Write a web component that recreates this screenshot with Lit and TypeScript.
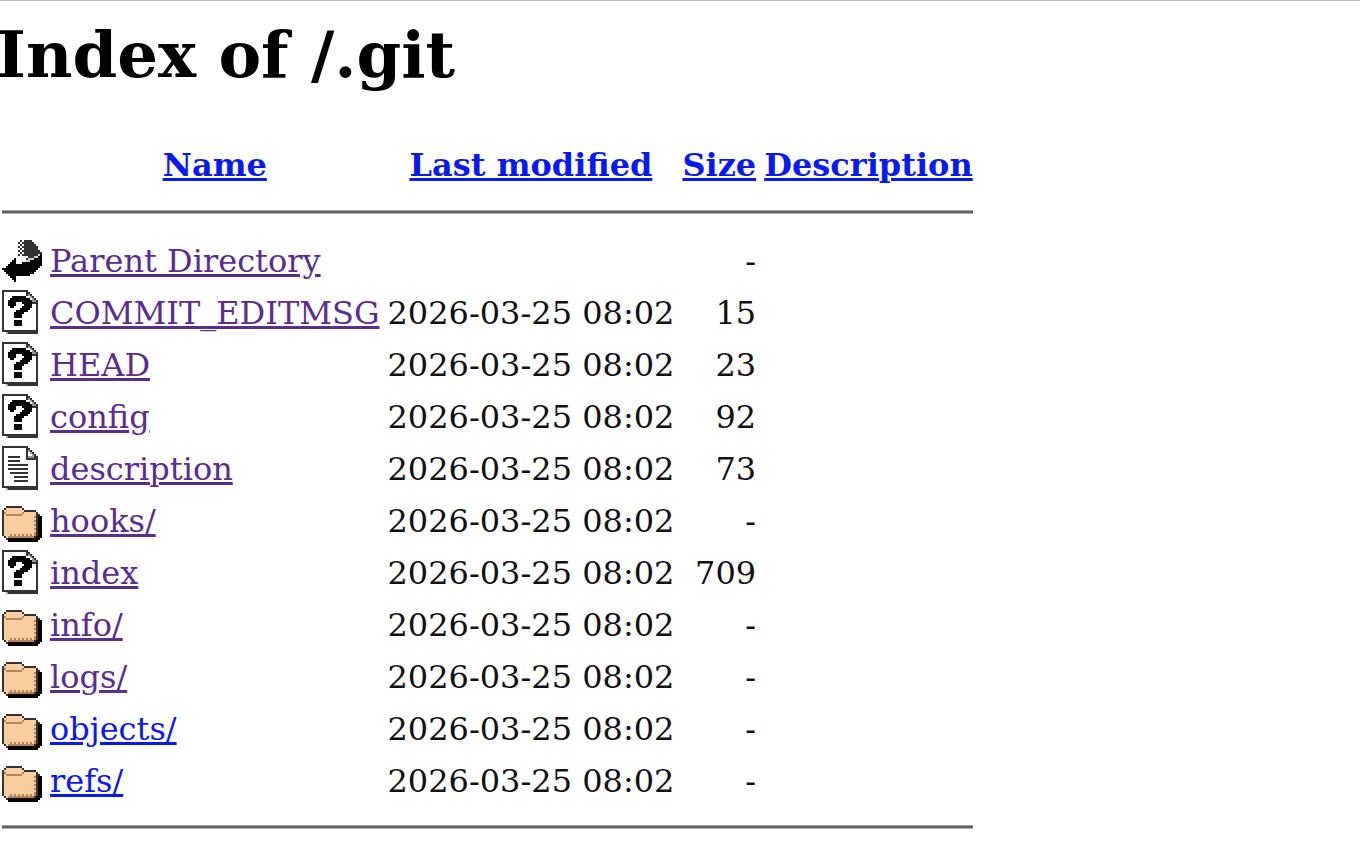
import { LitElement, html, css, svg } from "lit";
import { customElement, property } from "lit/decorators.js";

type Kind = "back" | "unknown" | "text" | "folder";

// Pixel maps, 20 columns by 22 rows; each letter is a palette entry.
const PALETTE: Record<string, string> = {
  k: "#050505",
  d: "#333333",
  g: "#999999",
  l: "#cccccc",
  w: "#ffffff",
  o: "#f9cd9e",
  b: "#b5835a",
};

const MAPS: Record<Kind, string[]> = {
  back: [
    "",
    ".........d.dddd.....",
    "........d.dddddd....",
    ".........d.dddddd...",
    "........d.dddddddd..",
    ".........d.ddddddd..",
    "........d.ddddddddd.",
    ".........d.ddddddddd",
    "........d.ddddddddlk",
    ".............dddllkk",
    "......k.....dlllkkkk",
    ".....kk.....llkkkkkk",
    "....kkk...kkkkkkkkkk",
    "...kkkkkkkkkkkkkkkkk",
    "..kkkkkkkkkkkkkkkkk.",
    "kkkkkkkkkkkkkkkkkk..",
    ".kkkkkkkkkkkkkkkk...",
    "..kkkkkkkkkkkkkk....",
    "...kkkkkkkkkkk......",
    "....kkk.............",
    ".....kk.............",
    "......k.............",
  ],
  unknown: [
    "ddddddddddddd.......",
    "dwwwwwwwwwwwdd......",
    "dwwwwwwwwwwwdgd.....",
    "dwwwwkkkkkkkwwgd....",
    "dwwwkkkkkkkkkkwgd...",
    "dwwkkkkkkkkkkkkggd..",
    "dwwkkkkwwwkkkkkddd..",
    "dwwkkkkwwwwkkkkwwd..",
    "dwwwkkwwwwkkkkkwwd..",
    "dwwwwwwwwkkkkkwwwd..",
    "dwwwwwwkkkkkkwwwwd..",
    "dwwwwwkkkkkwwwwwwd..",
    "dwwwwwkkkkwwwwwwwd..",
    "dwwwwwkkkkwwwwwwwd..",
    "dwwwwwwwwwwwwwwwwd..",
    "dwwwwwkkkkwwwwwwwd..",
    "dwwwwwkkkkwwwwwwwd..",
    "dwwwwwkkkkwwwwwwwd..",
    "dwwwwwwwwwwwwwwwwd..",
    "dwwwwwwwwwwwwwwwwd..",
    "dddddddddddddddddd..",
    "..gddddddddddddddd..",
  ],
  text: [
    "ddddddddddddd.......",
    "dwwwwwwwwwwwdd......",
    "dwwwwwwwwwwwdgd.....",
    "dwwwwwwwwwwwdwgd....",
    "dwwwwwwwwwwwdwwgd...",
    "dwwddddddwwwdgggdd..",
    "dwwwwwwwwwwwdddddd..",
    "dwwddddddwwwwwwwwd..",
    "dwwwwwwwwwwwwwwwwd..",
    "dwwddddddddddwwwwd..",
    "dwwwwwwwwwwwwwwwwd..",
    "dwwddddddddddwwwwd..",
    "dwwwwwwwwwwwwwwwwd..",
    "dwwwdddddddddwwwwd..",
    "dwwwwwwwwwwwwwwwwd..",
    "dwwwwwdddddddwwwwd..",
    "dwwwwwwwwwwwwwwwwd..",
    "dwwwwwdddddddwwwwd..",
    "dwwwwwwwwwwwwwwwwd..",
    "dwwwwwwwwwwwwwwwwd..",
    "dddddddddddddddddd..",
    "..gddddddddddddddd..",
  ],
  folder: [
    "",
    "",
    "",
    "",
    "..dddddddd..........",
    ".dooooooood.........",
    "doooooooooodddddd...",
    "dboooooooobooooood..",
    "dobbbbbbbbooooooodd.",
    "dooooooooooooooobdkk",
    "doooooooooooooooodkk",
    "dooooooooooooooobdkk",
    "doooooooooooooooodkk",
    "dooooooooooooooobdkk",
    "doooooooooooooooodkk",
    "dooooooooooooooobdkk",
    "doooooooooooooooodkk",
    "dooooooooooooooobdkk",
    "dooobobobobobobobdkk",
    ".dobbbbbbbbbbbbbdkkk",
    "..dkkkkkkkkkkkkkkkk.",
    "...kkkkkkkkkkkkkkk..",
  ],
};

const LABELS: Record<Kind, string> = {
  back: "[PARENTDIR]",
  unknown: "[   ]",
  text: "[TXT]",
  folder: "[DIR]",
};

interface Run {
  x: number;
  y: number;
  width: number;
  fill: string;
}

function runsOf(rows: string[]): Run[] {
  const runs: Run[] = [];
  rows.forEach((row, y) => {
    let x = 0;
    while (x < row.length) {
      const key = row[x];
      let end = x + 1;
      while (end < row.length && row[end] === key) end++;
      if (PALETTE[key]) runs.push({ x, y, width: end - x, fill: PALETTE[key] });
      x = end;
    }
  });
  return runs;
}

@customElement("file-icon")
class FileIcon extends LitElement {
  @property() kind: Kind = "unknown";

  static styles = css`
    :host {
      display: block;
    }
    .icon {
      display: block;
      width: 40px;
      height: 44px;
    }
  `;

  render() {
    return html`<svg class="icon" viewBox="0 0 20 22" role="img" aria-label=${LABELS[this.kind]} shape-rendering="crispEdges">
      ${runsOf(MAPS[this.kind]).map(
        (r) => svg`<rect x=${r.x} y=${r.y} width=${r.width} height="1" fill=${r.fill}></rect>`
      )}
    </svg>`;
  }
}

interface Entry {
  kind: Kind;
  name: string;
  href: string;
  modified: string;
  size: string;
  fresh?: boolean;
}

const STAMP = "2026-03-25 08:02";

const ENTRIES: Entry[] = [
  { kind: "back", name: "Parent Directory", href: "#parent", modified: "", size: "-" },
  { kind: "unknown", name: "COMMIT_EDITMSG", href: "#COMMIT_EDITMSG", modified: STAMP, size: "15" },
  { kind: "unknown", name: "HEAD", href: "#HEAD", modified: STAMP, size: "23" },
  { kind: "unknown", name: "config", href: "#config", modified: STAMP, size: "92" },
  { kind: "text", name: "description", href: "#description", modified: STAMP, size: "73" },
  { kind: "folder", name: "hooks/", href: "#hooks", modified: STAMP, size: "-" },
  { kind: "unknown", name: "index", href: "#index", modified: STAMP, size: "709" },
  { kind: "folder", name: "info/", href: "#info", modified: STAMP, size: "-" },
  { kind: "folder", name: "logs/", href: "#logs", modified: STAMP, size: "-" },
  { kind: "folder", name: "objects/", href: "#objects", modified: STAMP, size: "-", fresh: true },
  { kind: "folder", name: "refs/", href: "#refs", modified: STAMP, size: "-", fresh: true },
];

@customElement("app-root")
class AppRoot extends LitElement {
  static styles = css`
    :host {
      display: block;
      border-top: 1px solid #bbbbbb;
      background: #ffffff;
      color: #000000;
      font-family: "DejaVu Serif", serif;
      font-size: 32px;
      line-height: 38px;
    }
    .title {
      margin: 0 0 0 -4px;
      padding-top: 16px;
      font-size: 64px;
      line-height: 76px;
    }
    .listing {
      margin-top: 46px;
      margin-left: 2px;
      border-collapse: collapse;
      color: #111111;
    }
    .cell {
      padding: 5px 8px 3px 0;
      height: 44px;
      white-space: nowrap;
      text-align: left;
      vertical-align: middle;
    }
    .pic {
      padding: 4px 8px 4px 0;
    }
    .head {
      padding-top: 7px;
      padding-bottom: 1px;
      text-align: center;
      vertical-align: top;
    }
    .num {
      text-align: right;
    }
    .last {
      padding-right: 0;
    }
    .rule-cell {
      padding: 19px 0 20px;
    }
    .rule {
      margin: 0;
      border: 0;
      border-top: 1px solid #a0a0a0;
      border-bottom: 1px solid #b0b0b0;
      height: 2px;
      background: #606060;
    }
    .link {
      color: #5a2d91;
      text-decoration: underline;
    }
    .fresh {
      color: #0a1aee;
    }
  `;

  render() {
    return html`
      <h1 class="title">Index of /.git</h1>
      <table class="listing">
        <thead>
          <tr>
            <td class="cell pic"></td>
            <th class="cell head"><a class="link fresh" href="#name">Name</a></th>
            <th class="cell head"><a class="link fresh" href="#modified">Last modified</a></th>
            <th class="cell head"><a class="link fresh" href="#size">Size</a></th>
            <th class="cell head last"><a class="link fresh" href="#about">Description</a></th>
          </tr>
          <tr>
            <td class="rule-cell" colspan="5"><hr class="rule" /></td>
          </tr>
        </thead>
        <tbody>
          ${ENTRIES.map(
            (e) => html`<tr>
              <td class="cell pic"><file-icon .kind=${e.kind}></file-icon></td>
              <td class="cell"><a class="link ${e.fresh ? "fresh" : ""}" href=${e.href}>${e.name}</a></td>
              <td class="cell num">${e.modified}</td>
              <td class="cell num">${e.size}</td>
              <td class="cell last"></td>
            </tr>`
          )}
          <tr>
            <td class="rule-cell" colspan="5"><hr class="rule" /></td>
          </tr>
        </tbody>
      </table>
    `;
  }
}
